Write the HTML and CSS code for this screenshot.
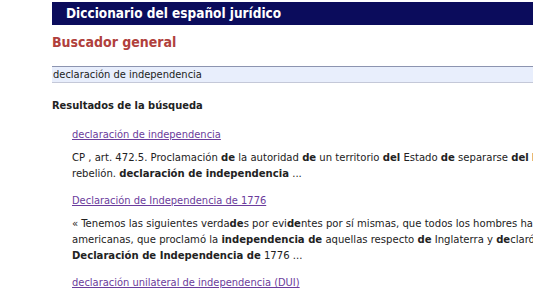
FILE: index.html
```html
<!DOCTYPE html>
<html lang="es">
<head>
    <meta charset="UTF-8">
    <title>Diccionario del español jurídico</title>
    <link rel="stylesheet" href="styles.css">
</head>
<body>
    <div class="page">
        <div class="header">Diccionario del español jurídico</div>
        <h2 class="search-title">Buscador general</h2>
        <input class="search-box" type="text" value="declaración de independencia">
        <h3 class="results-title">Resultados de la búsqueda</h3>
        <div class="results">
            <div class="result">
                <a href="#" class="result-link">declaración de independencia</a>
                <p class="result-text">CP , art. 472.5. Proclamación <b>de</b> la autoridad <b>de</b> un territorio <b>del</b> Estado <b>de</b> separarse <b>del</b> Estado en<br>rebelión. <b>declaración de independencia</b> ...</p>
            </div>
            <div class="result">
                <a href="#" class="result-link">Declaración de Independencia de 1776</a>
                <p class="result-text">« Tenemos las siguientes verda<b>de</b>s por evi<b>de</b>ntes por sí mismas, que todos los hombres han sido creados iguales ...<br>americanas, que proclamó la <b>independencia de</b> aquellas respecto <b>de</b> Inglaterra y <b>de</b>claró su independencia<br><b>Declaración de Independencia de</b> 1776 ...</p>
            </div>
            <div class="result">
                <a href="#" class="result-link">declaración unilateral de independencia (DUI)</a>
            </div>
        </div>
    </div>
</body>
</html>
```
FILE: styles.css
```css
html, body {
    margin: 0;
    overflow: hidden;
}
body {
    font-family: "DejaVu Sans Condensed", "DejaVu Sans", sans-serif;
    font-stretch: condensed;
    font-size: 11px;
    line-height: 16px;
    color: #222;
    background: #fff;
}
.page {
    margin-left: 52px;
    width: 620px;
    padding-top: 2px;
}
.header {
    background-color: #0b0c5c;
    color: #fff;
    font-weight: bold;
    font-size: 13.5px;
    height: 23px;
    line-height: 23px;
    padding-left: 14px;
}
.search-title {
    color: #b0403c;
    font-size: 14px;
    line-height: 18px;
    margin: 8px 0 15px 0;
}
.search-box {
    display: block;
    box-sizing: border-box;
    width: 100%;
    height: 17px;
    margin: 0;
    padding: 0 1px;
    border: none;
    border-top: 1px solid #8c94b0;
    border-bottom: 1px solid #c4c8d8;
    background: #e8eefc;
    font-family: inherit;
    font-stretch: condensed;
    font-size: 11px;
    color: #222;
}
.results-title {
    font-size: 11px;
    margin: 15px 0 13px 0;
}
.results {
    padding-left: 20px;
}
.result-link {
    color: #6b3c9c;
}
.result-text {
    margin: 7px 0 11px 0;
    white-space: nowrap;
    line-height: 16px;
    font-size: 11.2px;
}
```
